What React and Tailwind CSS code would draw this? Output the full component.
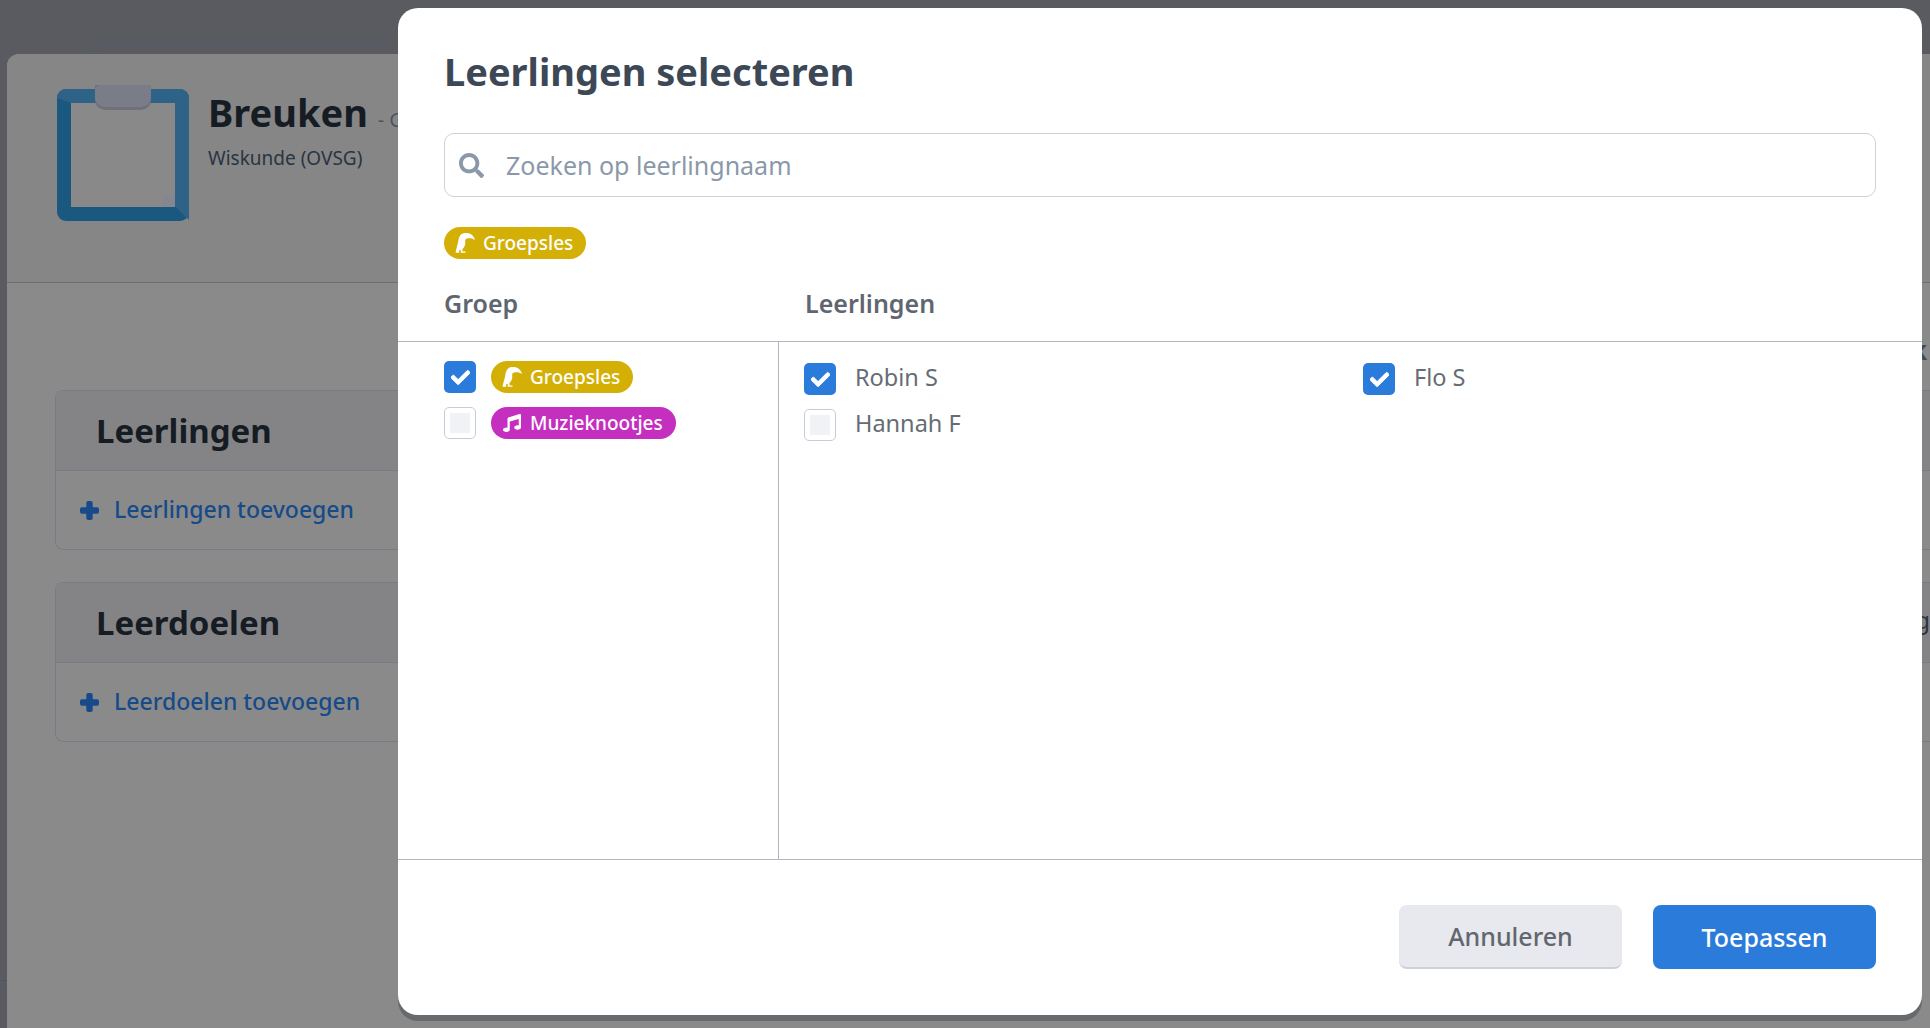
import { FaCheck, FaMusic, FaSearch } from 'react-icons/fa'

function Toucan() {
	return (
		<svg viewBox="0 0 20 20" className="h-[20px] w-[20px] fill-white">
			<path d="M8.500 .3C13-.5 18.500 1 20 7 17.500 5 14.500 4.800 12 5.600 10.200 6.200 10 7.500 10.200 9 10.500 11.500 9.500 14 7.500 15.800V18.600H10.500V19.700H5.800V16.800L4.200 17.200V19.700H.5C1.300 15.500 2.600 12 3.200 8.500 3.900 4.500 5 1 8.500 .3Z" />
		</svg>
	)
}

function Plus() {
	return (
		<svg viewBox="0 0 19 19" className="h-[19px] w-[19px] fill-[#164a88]">
			<rect x="6.300" y="0" width="6.400" height="19" rx="2" />
			<rect x="0" y="6.300" width="19" height="6.400" rx="2" />
		</svg>
	)
}

function Chip({ color, icon, children }) {
	return (
		<span className={`flex h-8 items-center gap-[8px] rounded-full pl-[11px] pr-[13px] text-[19px] font-medium text-white ${color}`}>
			<span className="flex w-[20px] justify-center">{icon}</span>
			{children}
		</span>
	)
}

function Checkbox({ checked }) {
	if (checked) {
		return (
			<span className="flex h-8 w-8 shrink-0 items-center justify-center rounded-[5px] bg-[#2b7bdb] text-white">
				<FaCheck size={19} stroke="currentColor" strokeWidth={24} />
			</span>
		)
	}
	return (
		<span className="flex h-8 w-8 shrink-0 items-center justify-center rounded-[5px] border border-[#c5cbd8] bg-white">
			<span className="h-5 w-5 bg-[#f1f2f5]" />
		</span>
	)
}

function Student({ checked, name }) {
	return (
		<div className="flex h-[46px] items-center gap-[19px] text-[23.5px] text-[#666c74]">
			<Checkbox checked={checked} />
			<span className="pb-[2px]">{name}</span>
		</div>
	)
}

function Card({ title, link }) {
	return (
		<div className="h-[160px] rounded-[8px] border border-[#787a88]">
			<div className="flex h-[80px] items-center border-b border-[#787a88] bg-[#848486] pl-[40px] text-[33px] font-bold text-[#161c24]">
				{title}
			</div>
			<div className="flex h-[78px] items-center gap-[15px] pl-[24px] text-[23px] font-medium text-[#164a88]">
				<Plus />
				<span className="pb-[2px]">{link}</span>
			</div>
		</div>
	)
}

function ClipboardIcon() {
	return (
		<svg viewBox="0 0 132 136" className="h-[136px] w-[132px]">
			<rect x="0" y="4" width="132" height="132" rx="9" fill="#1b587f" />
			<path d="M0 13a9 9 0 0 1 9-9h114a9 9 0 0 1 9 9v122l-14-14V18H14z" fill="#2f6287" />
			<rect x="14" y="18" width="104" height="104" fill="#898989" />
			<path d="M106 122v-12h12v12z" fill="#85868f" />
			<path d="M38 0h56v15a10 10 0 0 1-10 10H48a10 10 0 0 1-10-10z" fill="#6f7079" />
			<path d="M38 0h56v12a10 10 0 0 1-10 10H48a10 10 0 0 1-10-10V5a5 5 0 0 1 5-5z" fill="#7a7c87" />
		</svg>
	)
}

function Background() {
	return (
		<div className="absolute inset-0 bg-[#5a5b60]">
			<div className="ml-[94px] mt-[45px] h-[9px] rounded-tl-[8px] border-l border-t border-[#525b6c]" />
			<div className="absolute left-0 top-[980px] h-px w-[7px] bg-[#4d5566]" />
			<div className="ml-[7px] h-[974px] rounded-tl-[12px] bg-[#8a8a8a]">
				<div className="flex h-[229px] rounded-tl-[12px] border-b border-[#6d6e72] bg-[#868687] pl-[50px] pt-[31px]">
					<ClipboardIcon />
					<div className="ml-[19px]">
						<h1 className="mt-[5px] whitespace-nowrap text-[38px] font-bold leading-[44px] text-[#161c24]">
							Breuken <span className="text-[20px] font-normal text-[#4b5663]">- Groep</span>
						</h1>
						<p className="mt-[2px] text-[19px] text-[#2a3442]">Wiskunde (OVSG)</p>
					</div>
				</div>
				<div className="flex gap-[40px] pl-[48px] pt-[54px]">
					<div className="mt-[53px] flex w-[800px] flex-col gap-[32px]">
						<Card title="Leerlingen" link="Leerlingen toevoegen" />
						<Card title="Leerdoelen" link="Leerdoelen toevoegen" />
					</div>
					<div className="flex flex-1 flex-col">
						<div className="h-[53px] pl-[1029px] pt-[3px] text-[26px] font-bold leading-[20px] text-[#414b5b]">k</div>
						<div className="flex flex-col gap-[32px]">
							<div className="h-[160px] border-y border-[#787a88]">
								<div className="h-[80px] border-b border-[#787a88] bg-[#848486]" />
							</div>
							<div className="h-[160px] border-y border-[#787a88]">
								<div className="flex h-[80px] items-center border-b border-[#787a88] bg-[#848486] pb-[6px] pl-[1027px] text-[24px] text-[#2a3442]">ig</div>
							</div>
						</div>
					</div>
				</div>
			</div>
		</div>
	)
}

function Modal() {
	return (
		<div className="absolute left-[398px] top-[8px] flex h-[1007px] w-[1524px] flex-col rounded-[20px] bg-white shadow-[0_6px_0_#686b6e]">
			<div className="px-[46px]">
				<h2 className="mt-[39px] text-[38px] font-bold leading-[48px] text-[#3d4856]">Leerlingen selecteren</h2>
				<div className="mt-[38px] flex h-16 items-center rounded-[10px] border border-[#cfd0dc] pl-[14px] text-[25px] text-[#8b98a9]">
					<FaSearch size={25} className="text-[#8b98a9]" />
					<span className="ml-[22px] pt-[2px]">Zoeken op leerlingnaam</span>
				</div>
				<div className="mt-[30px] flex">
					<Chip color="bg-[#d4b007]" icon={<Toucan />}>Groepsles</Chip>
				</div>
			</div>
			<div className="mt-[26px] flex h-[57px] border-b border-[#b0b6bf] text-[25px] font-semibold leading-[36px] text-[#5f6670]">
				<div className="w-[407px] pl-[46px]">Groep</div>
				<div>Leerlingen</div>
			</div>
			<div className="flex h-[518px] border-b border-[#b0b6bf]">
				<div className="flex w-[381px] flex-col gap-[14px] border-r border-[#b0b6bf] pl-[46px] pt-[19px]">
					<div className="flex items-center gap-[15px]">
						<Checkbox checked />
						<Chip color="bg-[#d4b007]" icon={<Toucan />}>Groepsles</Chip>
					</div>
					<div className="flex items-center gap-[15px]">
						<Checkbox />
						<Chip color="bg-[#c42fc0]" icon={<FaMusic size={18} />}>Muzieknootjes</Chip>
					</div>
				</div>
				<div className="grid flex-1 grid-cols-2 content-start pl-[25px] pt-[14px]">
					<div className="w-[558px]"><Student checked name="Robin S" /></div>
					<Student checked name="Flo S" />
					<Student name="Hannah F" />
				</div>
			</div>
			<div className="flex flex-1 items-center justify-end gap-[31px] pb-[2px] pr-[46px]">
				<button className="h-16 w-[223px] rounded-[8px] border-b-2 border-[#cfd0da] bg-[#e8e9ee] pt-[2px] text-[25px] font-medium text-[#62666e]">Annuleren</button>
				<button className="h-16 w-[223px] rounded-[8px] bg-[#2b7bdb] pt-[2px] text-[25px] font-medium text-white">Toepassen</button>
			</div>
		</div>
	)
}

export default function App() {
	return (
		<div className="relative h-[1028px] w-[1930px] overflow-hidden" style={{ fontFamily: '"Noto Sans", sans-serif' }}>
			<Background />
			<Modal />
		</div>
	)
}
